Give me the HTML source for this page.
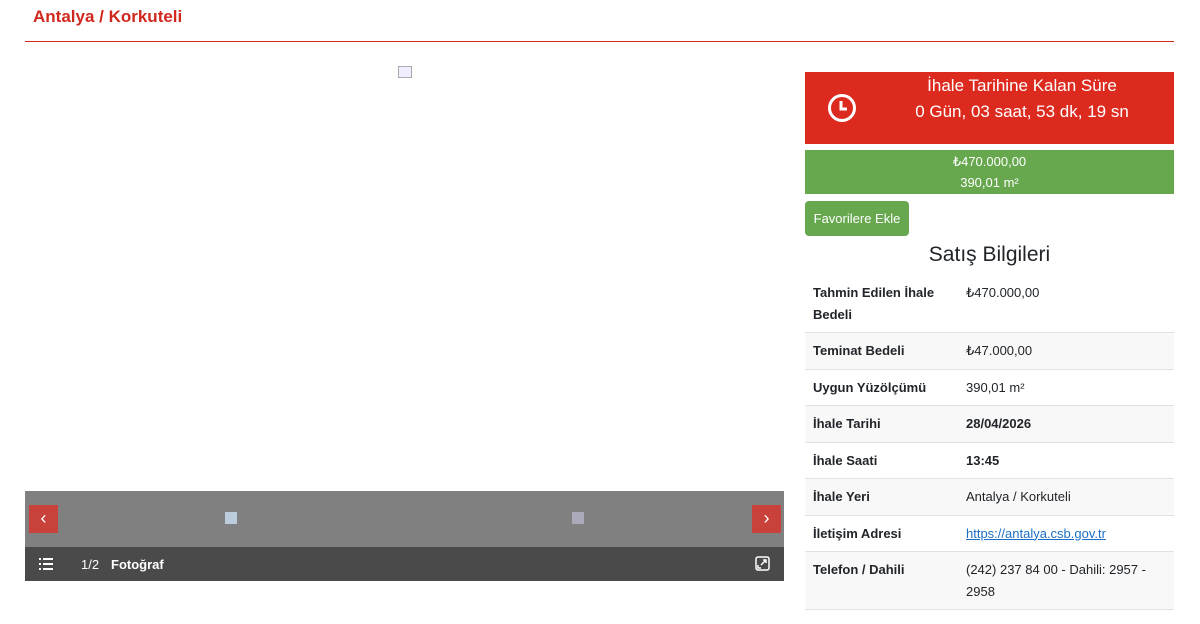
<!DOCTYPE html>
<html><head><meta charset="utf-8"><style>
*{box-sizing:border-box;margin:0;padding:0}
body{width:1200px;height:624px;background:#fff;font-family:"Liberation Sans",sans-serif;color:#212529;position:relative;overflow:hidden}
.title{position:absolute;left:33px;top:7px;font-size:17px;color:#d0281e;font-weight:bold}
.hr{position:absolute;left:25px;top:41px;width:1149px;height:0;border-top:1px solid #d0281e}
.img{position:absolute;left:398px;top:66px;width:14px;height:12px;border:1px solid #aaa;background:#eef}
.thumbs{position:absolute;left:25px;top:491px;width:759px;height:56px;background:#808080}
.bar{position:absolute;left:25px;top:547px;width:759px;height:34px;background:#4a4a4a;color:#fff;font-size:13px}
.arr{position:absolute;top:505px;width:29px;height:28px;background:#c8413a;color:#fff;font-size:18px;text-align:center;line-height:26px}
.red{position:absolute;left:805px;top:72px;width:369px;height:72px;background:#dc2a1f;color:#fff;text-align:center;font-size:17px;line-height:26px;padding-top:1px;padding-left:65px}
.green{position:absolute;left:805px;top:150px;width:369px;height:44px;background:#67a84e;color:#fff;text-align:center;font-size:13px;line-height:21px;padding-top:1px}
.btn{position:absolute;left:805px;top:201px;width:104px;height:35px;background:#67a84e;color:#fff;font-size:13px;border-radius:4px;text-align:center;line-height:35px}
h2{position:absolute;left:805px;width:369px;top:243px;text-align:center;font-size:21px;font-weight:normal}
table{position:absolute;left:805px;top:275px;width:369px;border-collapse:collapse;font-size:13px}
td{padding:7px 8px;vertical-align:top;border-bottom:1px solid #dee2e6;line-height:21.5px}
td:first-child{font-weight:bold;width:153px}
tr:nth-child(even) td{background:#f8f8f8}
a{color:#1a6fc4;text-decoration:underline}
</style></head><body>
<div class="title">Antalya / Korkuteli</div>
<div class="hr"></div>
<div class="img"></div>
<div class="thumbs"><div style="position:absolute;left:200px;top:21px;width:12px;height:12px;background:#bcd"></div><div style="position:absolute;left:547px;top:21px;width:12px;height:12px;background:#aab"></div></div>
<div class="arr" style="left:29px">‹</div>
<div class="arr" style="left:752px">›</div>
<div class="bar">
<svg style="position:absolute;left:14px;top:11px" width="14" height="12" viewBox="0 0 14 12"><g fill="#fff"><rect x="0" y="0" width="2" height="2"/><rect x="4" y="0" width="10" height="2"/><rect x="0" y="5" width="2" height="2"/><rect x="4" y="5" width="10" height="2"/><rect x="0" y="10" width="2" height="2"/><rect x="4" y="10" width="10" height="2"/></g></svg>
<span style="position:absolute;left:56px;top:10px">1/2</span><b style="position:absolute;left:86px;top:10px">Fotoğraf</b>
<svg style="position:absolute;left:730px;top:9px" width="15" height="15" viewBox="0 0 15 15" fill="none" stroke="#fff" stroke-width="1.5"><rect x="1" y="1" width="13" height="13" rx="2"/><path d="M6 9l5-5M8 4h3v3M3 9v3h3"/></svg>
</div>
<div class="red">
<svg style="position:absolute;left:22px;top:21px" width="30" height="30" viewBox="0 0 30 30" fill="none" stroke="#fff" stroke-width="3"><circle cx="15" cy="15" r="12.5"/><path d="M14 8v8h6"/></svg>
İhale Tarihine Kalan Süre<br>0 Gün, 03 saat, 53 dk, 19 sn</div>
<div class="green">₺470.000,00<br>390,01 m²</div>
<div class="btn">Favorilere Ekle</div>
<h2>Satış Bilgileri</h2>
<table>
<tr><td>Tahmin Edilen İhale Bedeli</td><td>₺470.000,00</td></tr>
<tr><td>Teminat Bedeli</td><td>₺47.000,00</td></tr>
<tr><td>Uygun Yüzölçümü</td><td>390,01 m²</td></tr>
<tr><td>İhale Tarihi</td><td><b>28/04/2026</b></td></tr>
<tr><td>İhale Saati</td><td><b>13:45</b></td></tr>
<tr><td>İhale Yeri</td><td>Antalya / Korkuteli</td></tr>
<tr><td>İletişim Adresi</td><td><a>https://antalya.csb.gov.tr</a></td></tr>
<tr><td>Telefon / Dahili</td><td>(242) 237 84 00 - Dahili: 2957 - 2958</td></tr>
</table>
</body></html>
